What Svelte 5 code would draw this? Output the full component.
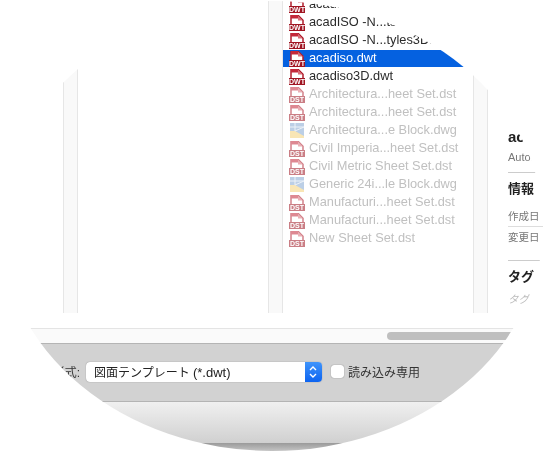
<script>
const files = [
  { name: 'acad...', type: 'DWT' },
  { name: 'acadISO -N...ts.dwt', type: 'DWT' },
  { name: 'acadISO -N...tyles3D.dwt', type: 'DWT' },
  { name: 'acadiso.dwt', type: 'DWT', selected: true },
  { name: 'acadiso3D.dwt', type: 'DWT' },
  { name: 'Architectura...heet Set.dst', type: 'DST', off: true },
  { name: 'Architectura...heet Set.dst', type: 'DST', off: true },
  { name: 'Architectura...e Block.dwg', type: 'DWG', off: true },
  { name: 'Civil Imperia...heet Set.dst', type: 'DST', off: true },
  { name: 'Civil Metric Sheet Set.dst', type: 'DST', off: true },
  { name: 'Generic 24i...le Block.dwg', type: 'DWG', off: true },
  { name: 'Manufacturi...heet Set.dst', type: 'DST', off: true },
  { name: 'Manufacturi...heet Set.dst', type: 'DST', off: true },
  { name: 'New Sheet Set.dst', type: 'DST', off: true }
]
</script>

<main>
  <div class="lens">
    <div class="columns">
      <div class="col first"></div>
      <div class="gutter"></div>
      <div class="col second"></div>
      <div class="gutter"></div>
      <div class="col list">
        {#each files as f}
          <div class={f.selected ? 'row selected' : f.off ? 'row off' : 'row'}>
            {#if f.type === 'DWG'}
              <svg class="icon" viewBox="0 0 16 16">
                <path d="M1 0h14v15H1z" fill="#86a9d3" />
                <path d="M1 8h5l9 5v2H1z" fill="#f5d27a" />
                <path d="M6 0v8M1 4h14M6 8l9-4" stroke="#dfe9f4" fill="none" />
              </svg>
            {:else}
              <svg class="icon" viewBox="0 0 16 16">
                <path d="M2 .8h7.5l4.5 4.5V10H2z" fill="#fff" stroke="#b01c2b" stroke-width="1.5" />
                <path d="M2 0h7v3.5H2z" fill="#c4283a" />
                <path d="M9 1l4.5 4.5H9z" fill="#d9707a" />
                <rect x="0" y="9" width="16" height="7" fill="#a01522" />
                <text x="8" y="15.2" text-anchor="middle">{f.type}</text>
              </svg>
            {/if}
            <span>{f.name}</span>
          </div>
        {/each}
      </div>
      <div class="gutter"></div>
      <div class="col info">
        <div class="title">acadiso.dwt</div>
        <div class="kind">Autodesk</div>
        <h3 class="rule">情報</h3>
        <div class="meta under">作成日</div>
        <div class="meta">変更日</div>
        <h3 class="rule tags">タグ</h3>
        <div class="tag">タグ</div>
      </div>
    </div>
    <div class="spacer"></div>
    <div class="track"><div class="thumb"></div></div>
    <div class="options">
      <span class="label">形式:</span>
      <div class="popup">
        <span>図面テンプレート <span class="ext">(*.dwt)</span></span>
        <div class="stepper">
          <svg viewBox="0 0 16 20" width="16" height="20">
            <path d="M5 8l3-3 3 3M5 12l3 3 3-3" fill="none" stroke="#fff" stroke-width="1.4" />
          </svg>
        </div>
      </div>
      <div class="check"></div>
      <span class="readonly">読み込み専用</span>
    </div>
    <div class="footer"></div>
    <div class="edge"></div>
  </div>
</main>

<style>
:global(body) {
  background: #fff;
}
main {
  width: 543px;
  height: 451px;
  overflow: hidden;
  background: #fff;
  filter: drop-shadow(0 0 1px rgba(0, 0, 0, 0.12));
  font-family: "Liberation Sans", "Noto Sans CJK JP", sans-serif;
}
.lens {
  width: 543px;
  height: 451px;
  background: #fff;
  clip-path: ellipse(271px 225px at 272px 226px);
  display: flex;
  flex-direction: column;
}
.columns {
  height: 313px;
  display: flex;
  overflow: hidden;
}
.col {
  overflow: hidden;
}
.first {
  width: 63px;
}
.second {
  width: 190px;
}
.gutter {
  box-sizing: border-box;
  width: 15px;
  flex: none;
  background: #f9f9f9;
  border-left: 1px solid #e6e6e6;
  border-right: 1px solid #e6e6e6;
}
.list {
  width: 190px;
  display: flex;
  flex-direction: column;
  gap: 1px;
  margin-top: -4px;
}
.row {
  flex: none;
  height: 17px;
  display: flex;
  align-items: center;
  gap: 4px;
  padding-left: 6px;
  font-size: 12.8px;
  color: #2b2b2b;
  white-space: nowrap;
}
.row span {
  margin-top: -2px;
}
.row.selected {
  background: #0561e0;
  color: #fff;
}
.row.off {
  color: #c0c0c0;
}
.row.off .icon {
  opacity: 0.55;
}
.icon {
  width: 16px;
  height: 16px;
  flex: none;
}
.icon text {
  font-size: 7px;
  font-weight: 700;
  fill: #fff;
}
.info {
  flex: 1;
  padding: 27px 0 0 20px;
  margin-top: 101px;
  color: #222;
  white-space: nowrap;
}
.title {
  font-size: 15px;
  font-weight: 700;
  line-height: 17px;
}
.kind {
  font-size: 11px;
  line-height: 15px;
  margin-top: 5px;
  color: #777;
}
.rule {
  margin: 0;
  font-size: 13px;
  font-weight: 700;
  line-height: 18px;
  border-top: 1px solid #ccc;
  padding-top: 7px;
  margin-top: 7px;
}
.meta {
  font-size: 10.5px;
  line-height: 20px;
  color: #777;
}
.meta.under {
  margin-top: 8px;
  border-bottom: 1px solid #ddd;
}
.rule.tags {
  margin-top: 13px;
}
.tag {
  font-size: 10.5px;
  color: #bbb;
  margin-top: 5px;
  font-style: italic;
}
.spacer {
  height: 15px;
  border-bottom: 1px solid #e4e4e4;
}
.track {
  height: 14px;
  background: #fafafa;
  position: relative;
  flex: none;
}
.thumb {
  position: absolute;
  left: 387px;
  width: 150px;
  top: 3px;
  height: 8px;
  border-radius: 4px;
  background: #bfbfbf;
}
.options {
  box-sizing: border-box;
  height: 59px;
  flex: none;
  background: #d2d2d2;
  border-top: 1px solid #b4b4b4;
  border-bottom: 1px solid #b4b4b4;
  display: flex;
  align-items: center;
  color: #333;
  font-size: 12px;
  padding-bottom: 2px;
}
.label {
  width: 80px;
  text-align: right;
  margin-right: 6px;
}
.popup {
  box-sizing: border-box;
  width: 236px;
  height: 20px;
  background: #fff;
  border-radius: 4px;
  box-shadow: 0 0 1px rgba(0, 0, 0, 0.5);
  display: flex;
  align-items: center;
  justify-content: space-between;
  padding-left: 8px;
  overflow: hidden;
  color: #222;
}
.ext {
  font-size: 13px;
}
.stepper {
  width: 17px;
  height: 20px;
  background: linear-gradient(#3f94fb, #0c63f0);
}
.check {
  box-sizing: border-box;
  width: 13px;
  height: 13px;
  margin-left: 9px;
  background: #fff;
  border-radius: 3px;
  box-shadow: 0 0 1px rgba(0, 0, 0, 0.6);
}
.readonly {
  margin-left: 4px;
}
.footer {
  height: 41px;
  flex: none;
  background: linear-gradient(#f0f0f0, #d0d0d0);
}
.edge {
  height: 8px;
  flex: none;
  background: linear-gradient(#9a9a9a, #c4c4c4);
}
</style>
